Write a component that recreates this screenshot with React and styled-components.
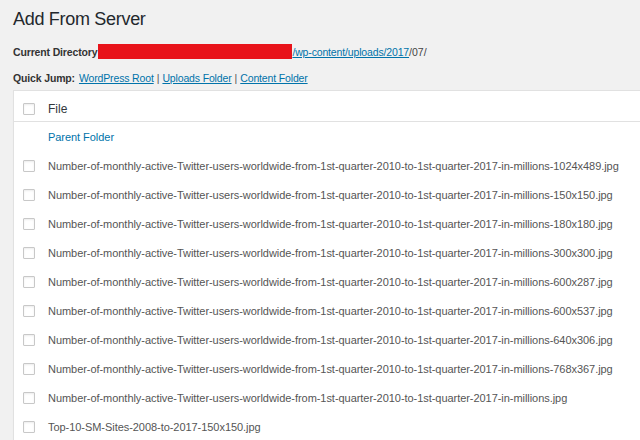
import React from "react";
import styled, { createGlobalStyle } from "styled-components";

const Global = createGlobalStyle`
  html, body { margin: 0; padding: 0; background: #f1f1f1; }
  body { font-family: "Liberation Sans", Arial, sans-serif; color: #444; overflow: hidden; }
  #root { width: 640px; height: 440px; overflow: hidden; }
`;

const Page = styled.div`
  padding: 8px 0 0 13px;
`;

const Title = styled.h1`
  margin: 0;
  font-size: 18px;
  font-weight: 400;
  color: #23282d;
  line-height: 22px;
  letter-spacing: -0.3px;
`;

const InfoLine = styled.div`
  font-size: 10.5px;
  line-height: 14px;
  margin-top: ${(p) => p.$mt}px;
  display: flex;
  align-items: center;
  white-space: nowrap;
  color: #444;
`;

const Label = styled.strong`
  font-weight: 700;
  color: #333;
  margin-right: ${(p) => p.$gap}px;
  letter-spacing: -0.15px;
`;

const Redact = styled.span`
  display: inline-block;
  width: 194px;
  height: 15px;
  background: #e8131a;
`;

const Link = styled.a`
  color: #0073aa;
  text-decoration: underline;
  cursor: pointer;
  letter-spacing: -0.15px;
`;

const Sep = styled.span`
  margin: 0 3px;
  color: #555;
`;

const Table = styled.div`
  margin-top: 5px;
  width: 700px;
  background: #fff;
  border-top: 1px solid #e1e1e1;
  border-left: 1px solid #e1e1e1;
  box-shadow: 0 1px 1px rgba(0, 0, 0, 0.04);
`;

const Row = styled.div`
  display: flex;
  align-items: center;
  box-sizing: border-box;
  height: ${(p) => (p.$head ? 31 : 29)}px;
  padding-top: ${(p) => (p.$head ? 6 : 0)}px;
  border-bottom: ${(p) => (p.$head ? "1px solid #e1e1e1" : "none")};
  font-size: ${(p) => (p.$head ? 12 : 11)}px;
  letter-spacing: ${(p) => (p.$head ? 0 : -0.05)}px;
  color: ${(p) => (p.$head ? "#32373c" : "#555")};
  white-space: nowrap;
`;

const CheckCell = styled.div`
  width: 34px;
  flex: none;
  display: flex;
  justify-content: flex-start;
  padding-left: 9px;
  box-sizing: border-box;
`;

const Box = styled.span`
  display: inline-block;
  width: 10px;
  height: 10px;
  border: 1px solid #c8c8c8;
  border-radius: 1px;
  background: #fff;
  box-shadow: inset 0 1px 2px rgba(0, 0, 0, 0.08);
`;

const NameCell = styled.div`
  flex: 1;
`;

const ParentLink = styled.a`
  color: #0073aa;
  text-decoration: none;
`;

const base =
  "Number-of-monthly-active-Twitter-users-worldwide-from-1st-quarter-2010-to-1st-quarter-2017-in-millions";
const files = [
  `${base}-1024x489.jpg`,
  `${base}-150x150.jpg`,
  `${base}-180x180.jpg`,
  `${base}-300x300.jpg`,
  `${base}-600x287.jpg`,
  `${base}-600x537.jpg`,
  `${base}-640x306.jpg`,
  `${base}-768x367.jpg`,
  `${base}.jpg`,
  "Top-10-SM-Sites-2008-to-2017-150x150.jpg",
];

export default function App() {
  return (
    <>
      <Global />
      <Page>
        <Title>Add From Server</Title>
        <InfoLine $mt={14}>
          <Label $gap={1}>Current Directory</Label>
          <Redact />
          <Link>/wp-content/uploads/2017</Link>/07/
        </InfoLine>
        <InfoLine $mt={12}>
          <Label $gap={4}>Quick Jump:</Label>
          <Link>WordPress Root</Link>
          <Sep>|</Sep>
          <Link>Uploads Folder</Link>
          <Sep>|</Sep>
          <Link>Content Folder</Link>
        </InfoLine>
        <Table>
          <Row $head>
            <CheckCell>
              <Box />
            </CheckCell>
            <NameCell>File</NameCell>
          </Row>
          <Row>
            <CheckCell />
            <NameCell>
              <ParentLink>Parent Folder</ParentLink>
            </NameCell>
          </Row>
          {files.map((f) => (
            <Row key={f}>
              <CheckCell>
                <Box />
              </CheckCell>
              <NameCell>{f}</NameCell>
            </Row>
          ))}
        </Table>
      </Page>
    </>
  );
}
